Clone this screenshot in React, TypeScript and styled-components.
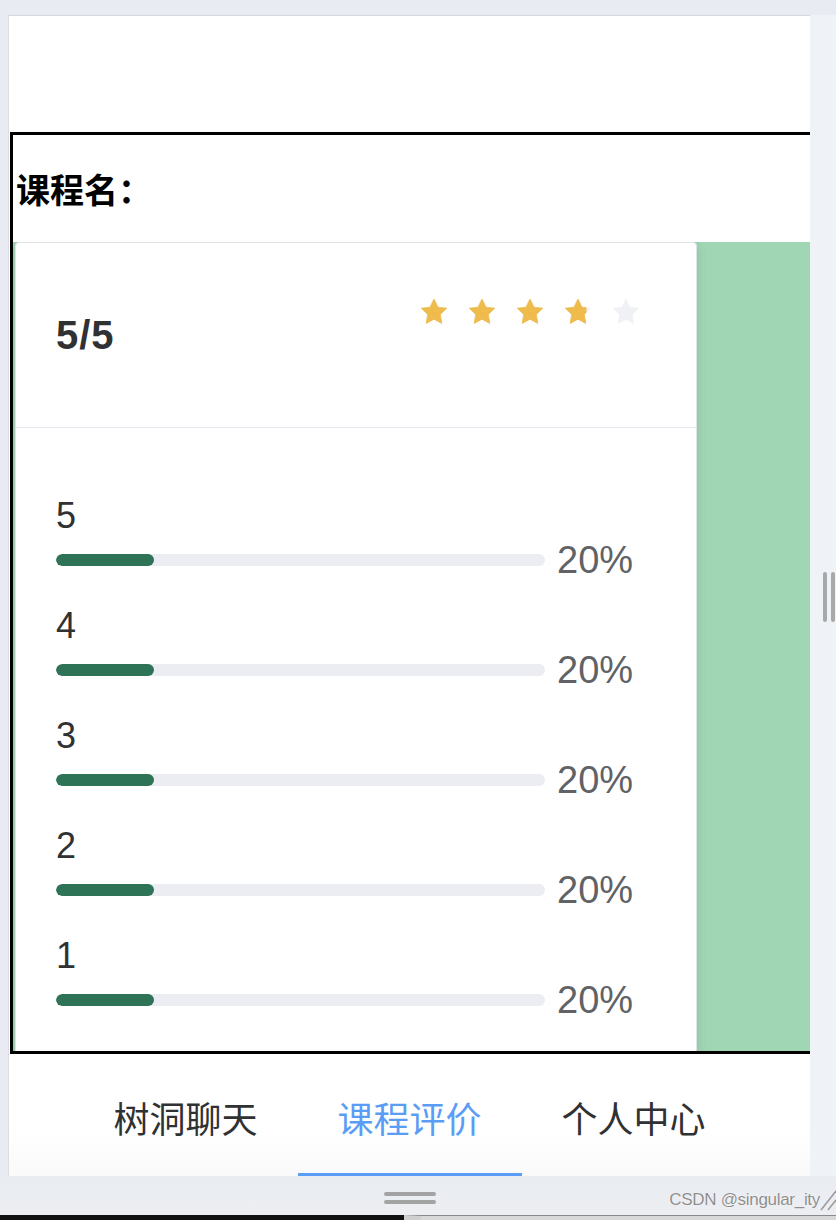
import styled, { createGlobalStyle } from 'styled-components';

const GlobalStyle = createGlobalStyle`
  html, body {
    margin: 0;
    padding: 0;
  }
  body {
    background: #e9ecf1;
    font-family: "Liberation Sans", Arial, sans-serif;
  }
`;

const Screen = styled.div`
  width: 836px;
  height: 1220px;
  display: flex;
  flex-direction: column;
  overflow: hidden;
  background: #e9ecf1;
`;

const TopGap = styled.div`
  height: 15px;
  flex: none;
  background: #e8ebf1;
`;

const Middle = styled.div`
  display: flex;
  height: 1161px;
  flex: none;
`;

const LeftGutter = styled.div`
  width: 8px;
  flex: none;
  background: #e8ebf1;
`;

const Phone = styled.div`
  width: 801px;
  flex: none;
  display: flex;
  flex-direction: column;
  background: #fff;
  border-top: 1px solid #d4d7dc;
  border-left: 1px solid #dadde2;
  overflow: hidden;
`;

const RightStrip = styled.div`
  flex: 1;
  display: flex;
  gap: 4px;
  padding: 557px 0 0 13px;
  background: #eff2f7;
`;

const ScrollBar = styled.div`
  width: 4px;
  height: 50px;
  border-radius: 2px;
  background: #a8a8a8;
`;

const HeaderSpace = styled.div`
  height: 116px;
  flex: none;
`;

const ContentBox = styled.div`
  height: 922px;
  flex: none;
  margin-left: 1px;
  box-sizing: border-box;
  border: 3px solid #000;
  border-right: none;
  display: flex;
  flex-direction: column;
`;

const CourseTitle = styled.h2`
  margin: 0;
  height: 107px;
  display: flex;
  align-items: center;
  padding-left: 3px;
  font-family: "Noto Sans CJK SC", sans-serif;
  font-size: 34px;
  font-weight: 700;
  color: #000;
`;

const GreenPanel = styled.div`
  height: 809px;
  padding-left: 2px;
  background: #a1d6b5;
  overflow: hidden;
`;

const Card = styled.div`
  width: 682px;
  box-sizing: border-box;
  background: #fff;
  border: 1px solid #dfe3e8;
  border-radius: 4px;
  box-shadow: 0 2px 12px 0 rgba(0, 0, 0, 0.12);
`;

const CardHeader = styled.div`
  height: 184px;
  display: flex;
  justify-content: space-between;
  align-items: center;
  padding: 0 55px 0 40px;
  border-bottom: 1px solid #e4e7ed;
`;

const Score = styled.div`
  font-size: 40px;
  font-weight: 700;
  letter-spacing: 1px;
  color: #303133;
`;

const Stars = styled.div`
  align-self: flex-start;
  margin-top: 54px;
  display: flex;
  gap: 18px;
`;

const CardBody = styled.div`
  padding: 68px 0 40px 40px;
`;

const RateRow = styled.div`
  margin-bottom: 25px;
`;

const RateLabel = styled.div`
  font-size: 36px;
  line-height: 40px;
  color: #303133;
  margin-bottom: 3px;
`;

const BarLine = styled.div`
  display: flex;
  align-items: center;
  height: 42px;
`;

const Track = styled.div`
  width: 489px;
  height: 12px;
  border-radius: 6px;
  background: #ebedf2;
  overflow: hidden;
`;

const Fill = styled.div`
  height: 100%;
  border-radius: 6px;
  background: #2f7356;
`;

const Percent = styled.span`
  margin-left: 12px;
  font-size: 38px;
  line-height: 42px;
  color: #606266;
`;

const TabBar = styled.div`
  height: 122px;
  flex: none;
  display: flex;
  justify-content: center;
  background: linear-gradient(#fff 60%, #fafafa);
`;

const Tab = styled.div<{ $active?: boolean }>`
  width: 224px;
  box-sizing: border-box;
  display: flex;
  align-items: center;
  justify-content: center;
  padding-top: 6px;
  font-family: "Noto Sans CJK SC", sans-serif;
  font-size: 36px;
  color: ${({ $active }) => ($active ? '#5b9cf5' : '#303133')};
  border-bottom: 3px solid ${({ $active }) => ($active ? '#5b9cf8' : 'transparent')};
`;

const BottomBar = styled.div`
  position: relative;
  height: 39px;
  flex: none;
  padding-left: 9px;
  background: linear-gradient(#e9ecf1, #eceef2);
`;

const HandleArea = styled.div`
  width: 801px;
  display: flex;
  flex-direction: column;
  align-items: center;
  gap: 4px;
  padding-top: 16px;
`;

const HandleBar = styled.div`
  width: 52px;
  height: 4px;
  border-radius: 2px;
  background: #a3a3a3;
`;

const Watermark = styled.span`
  position: absolute;
  right: 16px;
  bottom: 5px;
  font-size: 17px;
  color: #8e8e8e;
  letter-spacing: -0.3px;
  text-shadow: 0 0 1px #fff, 0 0 1px #fff;
`;

const Grip = styled.svg`
  position: absolute;
  right: 0;
  bottom: 4px;
`;

const BottomStrip = styled.div`
  height: 5px;
  flex: none;
  display: flex;
`;

const DarkPart = styled.div`
  width: 404px;
  background: #111;
`;

const LightPart = styled.div`
  flex: 1;
  background: #d8d8d8;
  border-top: 1px solid #8a8a8a;
  border-left: 17px solid #cfcfcf;
`;

function Star({ fill, id }: { fill: number; id: string }) {
  const pts = '12,1.6 15.1,8.1 22.2,9 17,14 18.3,21.2 12,17.7 5.7,21.2 7,14 1.8,9 8.9,8.1';
  return (
    <svg width="30" height="30" viewBox="0 0 24 24">
      <defs>
        <clipPath id={id}>
          <rect x="0" y="0" width={24 * fill} height="24" />
        </clipPath>
      </defs>
      <polygon points={pts} fill="#eff1f5" stroke="#eff1f5" strokeWidth="0.6" strokeLinejoin="round" />
      <polygon
        points={pts}
        fill="#efbb4c"
        stroke="#efbb4c"
        strokeWidth="0.6"
        strokeLinejoin="round"
        clipPath={`url(#${id})`}
      />
    </svg>
  );
}

const rates = [5, 4, 3, 2, 1].map((level) => ({ level, percent: 20 }));
const starFills = [1, 1, 1, 0.78, 0];

export default function App() {
  return (
    <Screen>
      <GlobalStyle />
      <TopGap />
      <Middle>
        <LeftGutter />
        <Phone>
          <HeaderSpace />
          <ContentBox>
            <CourseTitle>课程名：</CourseTitle>
            <GreenPanel>
              <Card>
                <CardHeader>
                  <Score>5/5</Score>
                  <Stars>
                    {starFills.map((f, i) => (
                      <Star key={i} fill={f} id={`star-clip-${i}`} />
                    ))}
                  </Stars>
                </CardHeader>
                <CardBody>
                  {rates.map((r) => (
                    <RateRow key={r.level}>
                      <RateLabel>{r.level}</RateLabel>
                      <BarLine>
                        <Track>
                          <Fill style={{ width: `${r.percent}%` }} />
                        </Track>
                        <Percent>{r.percent}%</Percent>
                      </BarLine>
                    </RateRow>
                  ))}
                </CardBody>
              </Card>
            </GreenPanel>
          </ContentBox>
          <TabBar>
            <Tab>树洞聊天</Tab>
            <Tab $active>课程评价</Tab>
            <Tab>个人中心</Tab>
          </TabBar>
        </Phone>
        <RightStrip>
          <ScrollBar />
          <ScrollBar />
        </RightStrip>
      </Middle>
      <BottomBar>
        <HandleArea>
          <HandleBar />
          <HandleBar />
        </HandleArea>
        <Watermark>CSDN @singular_ity</Watermark>
        <Grip width="16" height="26" viewBox="0 0 16 26">
          <line x1="1" y1="25" x2="16" y2="6" stroke="#9a9a9a" strokeWidth="1.5" />
          <line x1="8" y1="25" x2="16" y2="15" stroke="#9a9a9a" strokeWidth="1.5" />
        </Grip>
      </BottomBar>
      <BottomStrip>
        <DarkPart />
        <LightPart />
      </BottomStrip>
    </Screen>
  );
}
